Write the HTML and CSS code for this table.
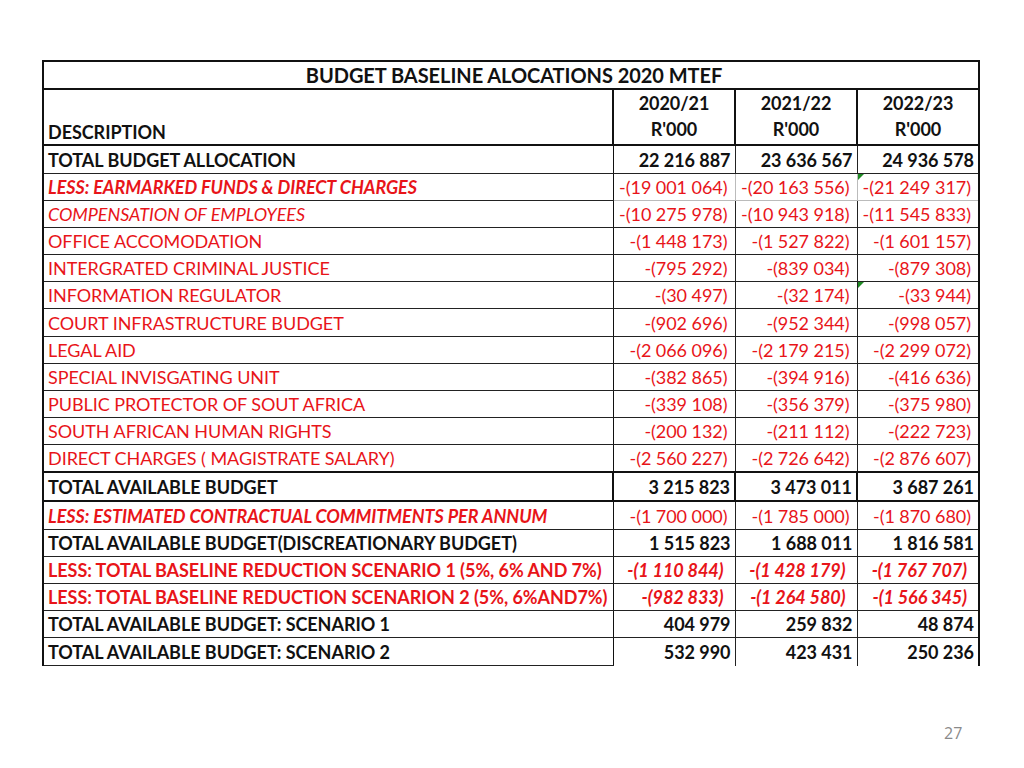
FILE: index.html
```html
<!DOCTYPE html>
<html>
<head>
<meta charset="utf-8">
<link rel="stylesheet" href="styles.css">
</head>
<body>
<div class="slide">
  <table class="budget">
    <colgroup>
      <col class="c-desc"><col class="c-num"><col class="c-num"><col class="c-num">
    </colgroup>
    <tr class="title-row"><td colspan="4">BUDGET BASELINE ALOCATIONS 2020 MTEF</td></tr>
    <tr class="head-row">
      <td class="desc">DESCRIPTION</td>
      <td class="yr">2020/21<br>R'000</td>
      <td class="yr">2021/22<br>R'000</td>
      <td class="yr">2022/23<br>R'000</td>
    </tr>
    <tr class="r28 tot"><td class="desc">TOTAL BUDGET ALLOCATION</td><td>22 216 887</td><td>23 636 567</td><td>24 936 578</td></tr>
    <tr class="r27 red lite"><td class="desc bi">LESS: EARMARKED FUNDS &amp; DIRECT CHARGES</td><td>-(19 001 064)</td><td>-(20 163 556)</td><td class="mark">-(21 249 317)</td></tr>
    <tr class="r27 red"><td class="desc it">COMPENSATION OF EMPLOYEES</td><td>-(10 275 978)</td><td>-(10 943 918)</td><td>-(11 545 833)</td></tr>
    <tr class="r27 red"><td class="desc">OFFICE ACCOMODATION</td><td>-(1 448 173)</td><td>-(1 527 822)</td><td>-(1 601 157)</td></tr>
    <tr class="r27 red"><td class="desc">INTERGRATED CRIMINAL JUSTICE</td><td>-(795 292)</td><td>-(839 034)</td><td>-(879 308)</td></tr>
    <tr class="r27 red"><td class="desc">INFORMATION REGULATOR</td><td>-(30 497)</td><td>-(32 174)</td><td class="mark">-(33 944)</td></tr>
    <tr class="r28 red"><td class="desc">COURT INFRASTRUCTURE BUDGET</td><td>-(902 696)</td><td>-(952 344)</td><td>-(998 057)</td></tr>
    <tr class="r27 red"><td class="desc">LEGAL AID</td><td>-(2 066 096)</td><td>-(2 179 215)</td><td>-(2 299 072)</td></tr>
    <tr class="r27 red"><td class="desc">SPECIAL INVISGATING UNIT</td><td>-(382 865)</td><td>-(394 916)</td><td>-(416 636)</td></tr>
    <tr class="r27 red"><td class="desc">PUBLIC PROTECTOR OF SOUT AFRICA</td><td>-(339 108)</td><td>-(356 379)</td><td>-(375 980)</td></tr>
    <tr class="r27 red"><td class="desc">SOUTH AFRICAN HUMAN RIGHTS</td><td>-(200 132)</td><td>-(211 112)</td><td>-(222 723)</td></tr>
    <tr class="r27 red"><td class="desc">DIRECT CHARGES ( MAGISTRATE SALARY)</td><td>-(2 560 227)</td><td>-(2 726 642)</td><td>-(2 876 607)</td></tr>
    <tr class="r29 tot thick"><td class="desc">TOTAL AVAILABLE BUDGET</td><td>3 215 823</td><td>3 473 011</td><td>3 687 261</td></tr>
    <tr class="r28 red"><td class="desc bi">LESS: ESTIMATED CONTRACTUAL COMMITMENTS PER ANNUM</td><td>-(1 700 000)</td><td>-(1 785 000)</td><td>-(1 870 680)</td></tr>
    <tr class="r27 tot"><td class="desc">TOTAL AVAILABLE BUDGET(DISCREATIONARY BUDGET)</td><td>1 515 823</td><td>1 688 011</td><td>1 816 581</td></tr>
    <tr class="r27 red bold-red"><td class="desc b">LESS: TOTAL BASELINE REDUCTION SCENARIO 1 (5%, 6% AND 7%)</td><td>-(1 110 844)</td><td>-(1 428 179)</td><td>-(1 767 707)</td></tr>
    <tr class="r27 red bold-red"><td class="desc b">LESS: TOTAL BASELINE REDUCTION SCENARION 2 (5%, 6%AND7%)</td><td>-(982 833)</td><td>-(1 264 580)</td><td>-(1 566 345)</td></tr>
    <tr class="r27 tot"><td class="desc">TOTAL AVAILABLE BUDGET: SCENARIO 1</td><td>404 979</td><td>259 832</td><td>48 874</td></tr>
    <tr class="r28 tot last"><td class="desc">TOTAL AVAILABLE BUDGET: SCENARIO 2</td><td>532 990</td><td>423 431</td><td>250 236</td></tr>
  </table>
  <div class="page-num">27</div>
</div>
</body>
</html>
```

FILE: styles.css
```css
html, body {
  margin: 0;
  padding: 0;
  background: #ffffff;
}
.slide {
  width: 1024px;
  height: 768px;
  position: relative;
  font-family: Lato, "Liberation Sans", sans-serif;
  padding: 60px 0 0 42px;
  box-sizing: border-box;
}
.budget {
  border-collapse: collapse;
  table-layout: fixed;
  width: 938px;
  font-size: 18px;
  letter-spacing: -0.05px;
}
.c-desc { width: 570px; }
.c-num { width: 122px; }
.budget td {
  padding: 0 4px 0 0;
  border: 1px solid #222;
  text-align: right;
  white-space: nowrap;
  line-height: 20px;
  color: #111;
  position: relative;
}
.budget td.desc {
  text-align: left;
  padding-left: 4px;
  border-left: 2px solid #111;
  border-right: 1px solid #111;
}
.budget tr td:last-child { border-right: 2px solid #111; }
.title-row td {
  height: 26px;
  text-align: center;
  font-weight: 700;
  font-size: 20px;
  border: 2px solid #111;
  padding: 0;
  padding-left: 6px;
}
.head-row td {
  height: 52px;
  border: 2px solid #111;
  font-weight: 700;
  vertical-align: bottom;
  padding-bottom: 2px;
}
.head-row td.yr {
  text-align: center;
  line-height: 26px;
  padding-right: 0;
  vertical-align: middle;
}
.head-row td.desc { border-right: 2px solid #111; }
.r27 td { height: 26px; }
.r28 td { height: 27px; }
.r29 td { height: 27px; }
.tot td { font-weight: 700; }
.red td { color: #e81419; padding-right: 7px; }
.red td.desc { color: #e81419; }
.red td.it { font-style: italic; }
.red td.bi { font-style: italic; font-weight: 700; }
.red td.b { font-weight: 700; }
.bold-red td:not(.desc) { font-weight: 700; font-style: italic; padding-right: 11px; }
.lite td:not(.desc) { border-color: #bbb; }
.lite td:last-child { border-right-color: #111; }
.thick td { border-top: 2px solid #111; border-bottom: 2px solid #111; }
.thick td:not(.desc) { border-left: 2px solid #111; border-right: 2px solid #111; }
.last td:not(.desc) { border-bottom: none; }
.last td:last-child { border-right: 1px solid #ccc; }
.mark::before {
  content: "";
  position: absolute;
  left: 0;
  top: 0;
  border-top: 6px solid #1f8a24;
  border-right: 6px solid transparent;
}
.page-num {
  position: absolute;
  left: 944px;
  top: 722px;
  font-family: "Open Sans", "Liberation Sans", sans-serif;
  font-size: 16px;
  color: #8a8a8a;
}
```
